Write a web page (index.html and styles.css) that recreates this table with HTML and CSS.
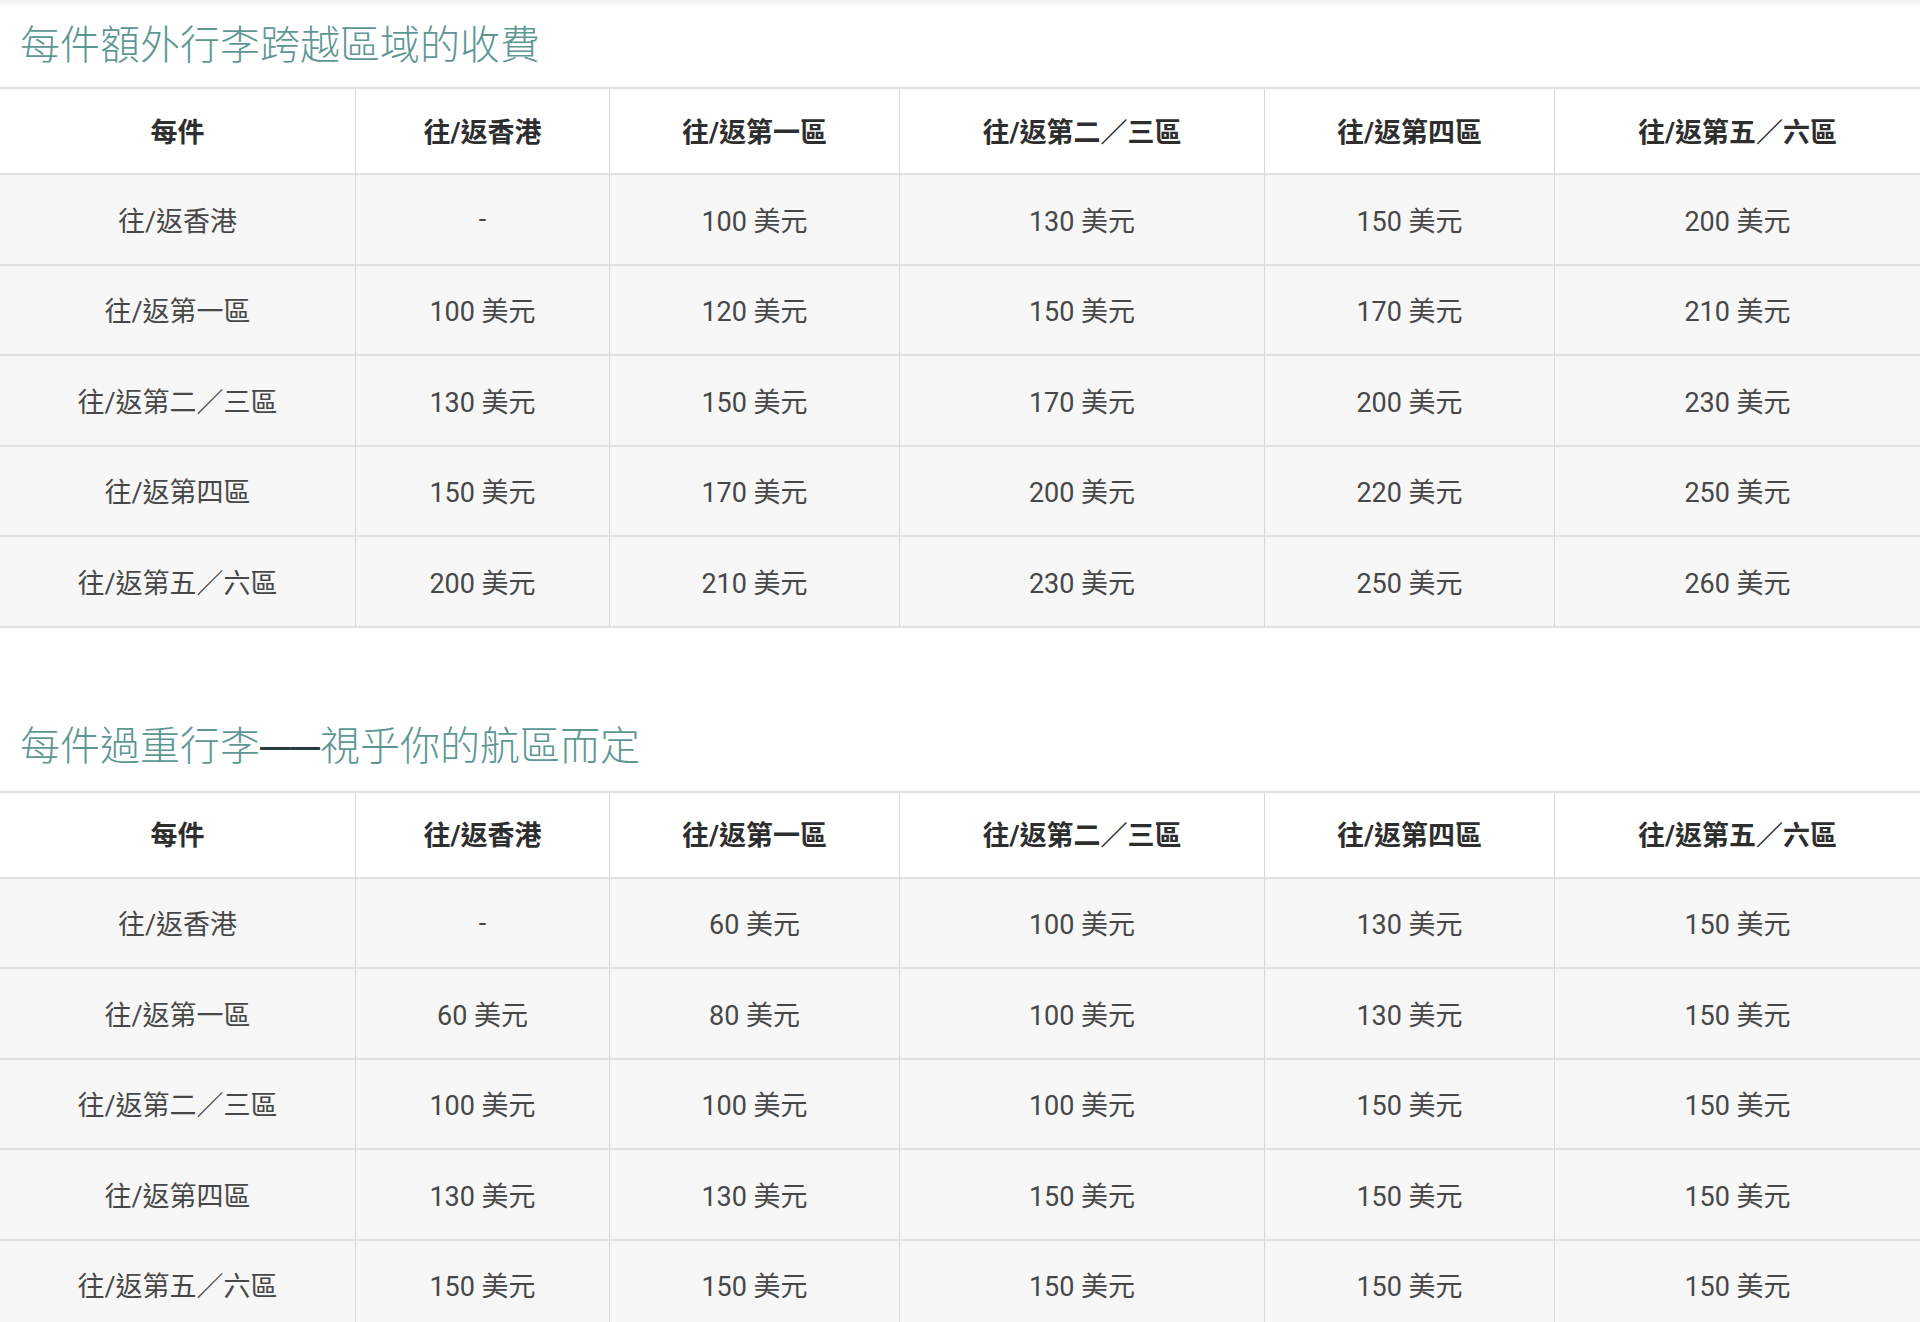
FILE: index.html
```html
<!DOCTYPE html>
<html lang="zh-Hant">
<head>
<meta charset="utf-8">
<title>行李收費</title>
<link rel="stylesheet" href="styles.css">
</head>
<body>
<div class="topband"></div>
<section class="block">
  <h2 class="title">每件額外行李跨越區域的收費</h2>
  <table class="fees">
    <colgroup>
      <col class="c1"><col class="c2"><col class="c3"><col class="c4"><col class="c5"><col class="c6">
    </colgroup>
    <thead>
      <tr><th>每件</th><th>往/返香港</th><th>往/返第一區</th><th>往/返第二／三區</th><th>往/返第四區</th><th>往/返第五／六區</th></tr>
    </thead>
    <tbody>
      <tr><td>往/返香港</td><td>-</td><td>100 美元</td><td>130 美元</td><td>150 美元</td><td>200 美元</td></tr>
      <tr><td>往/返第一區</td><td>100 美元</td><td>120 美元</td><td>150 美元</td><td>170 美元</td><td>210 美元</td></tr>
      <tr><td>往/返第二／三區</td><td>130 美元</td><td>150 美元</td><td>170 美元</td><td>200 美元</td><td>230 美元</td></tr>
      <tr><td>往/返第四區</td><td>150 美元</td><td>170 美元</td><td>200 美元</td><td>220 美元</td><td>250 美元</td></tr>
      <tr><td>往/返第五／六區</td><td>200 美元</td><td>210 美元</td><td>230 美元</td><td>250 美元</td><td>260 美元</td></tr>
    </tbody>
  </table>
</section>
<section class="block second">
  <h2 class="title">每件過重行李<span class="dash">——</span>視乎你的航區而定</h2>
  <table class="fees">
    <colgroup>
      <col class="c1"><col class="c2"><col class="c3"><col class="c4"><col class="c5"><col class="c6">
    </colgroup>
    <thead>
      <tr><th>每件</th><th>往/返香港</th><th>往/返第一區</th><th>往/返第二／三區</th><th>往/返第四區</th><th>往/返第五／六區</th></tr>
    </thead>
    <tbody>
      <tr><td>往/返香港</td><td>-</td><td>60 美元</td><td>100 美元</td><td>130 美元</td><td>150 美元</td></tr>
      <tr><td>往/返第一區</td><td>60 美元</td><td>80 美元</td><td>100 美元</td><td>130 美元</td><td>150 美元</td></tr>
      <tr><td>往/返第二／三區</td><td>100 美元</td><td>100 美元</td><td>100 美元</td><td>150 美元</td><td>150 美元</td></tr>
      <tr><td>往/返第四區</td><td>130 美元</td><td>130 美元</td><td>150 美元</td><td>150 美元</td><td>150 美元</td></tr>
      <tr><td>往/返第五／六區</td><td>150 美元</td><td>150 美元</td><td>150 美元</td><td>150 美元</td><td>150 美元</td></tr>
    </tbody>
  </table>
</section>
</body>
</html>
```

FILE: styles.css
```css
html, body {
  margin: 0;
  padding: 0;
  background: #ffffff;
}

body {
  font-family: Roboto, "Noto Sans CJK TC", sans-serif;
  color: #3a3a3a;
  overflow: hidden;
}

.topband {
  height: 8px;
  background: linear-gradient(#f1f1f1, #ffffff);
}

.block {
  display: flex;
  flex-direction: column;
}

.title {
  margin: 10px 0 21px 0;
  padding-left: 20px;
  font-family: "Noto Sans CJK TC", sans-serif;
  font-weight: 300;
  font-size: 40px;
  line-height: 48px;
  color: #5d9794;
}

.second .title {
  margin-top: 91px;
  margin-bottom: 20px;
}

.dash {
  font-family: "Liberation Sans", sans-serif;
  font-size: 30px;
  font-weight: 700;
  color: #263f3d;
  vertical-align: 3px;
}

.fees {
  width: 1920px;
  table-layout: fixed;
  border-collapse: separate;
  border-spacing: 0;
  border-top: 2px solid #e1e1e1;
}

.c1 { width: 356px; }
.c2 { width: 254px; }
.c3 { width: 290px; }
.c4 { width: 365px; }
.c5 { width: 290px; }
.c6 { width: 365px; }

.fees th,
.fees td {
  box-sizing: border-box;
  padding: 0 8px;
  text-align: center;
  vertical-align: middle;
  font-size: 27px;
  border-bottom: 2px solid #e1e1e1;
  border-right: 1px solid #d8d8d8;
}

.fees th:last-child,
.fees td:last-child {
  border-right: none;
}

.fees th {
  height: 86px;
  padding-bottom: 2px;
  font-weight: 700;
  color: #2e2e2e;
  background: #ffffff;
}

.fees td {
  height: 90.5px;
  font-weight: 400;
  color: #474747;
  background: #f7f7f7;
}
```
